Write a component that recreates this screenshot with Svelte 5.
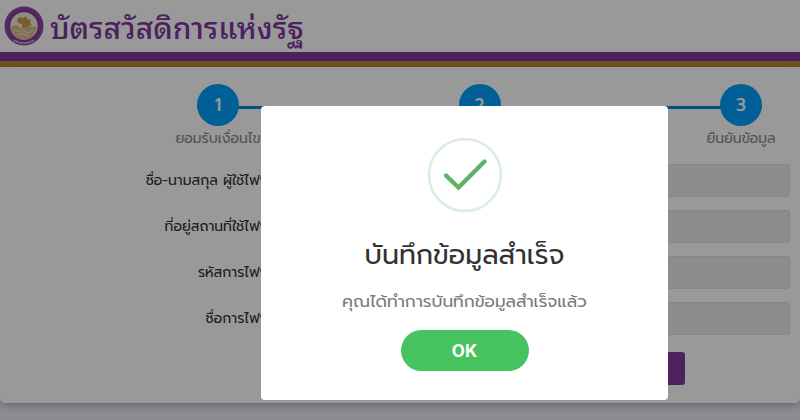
<script>
  const steps = [
    { number: 1, label: 'ยอมรับเงื่อนไข' },
    { number: 2, label: 'กรอกข้อมูล' },
    { number: 3, label: 'ยืนยันข้อมูล' }
  ];
  const fields = [
    { id: 'name', label: 'ชื่อ-นามสกุล ผู้ใช้ไฟฟ้า' },
    { id: 'address', label: 'ที่อยู่สถานที่ใช้ไฟฟ้า' },
    { id: 'code', label: 'รหัสการไฟฟ้า' },
    { id: 'office', label: 'ชื่อการไฟฟ้า' }
  ];
  let open = $state(true);
</script>

<div class="page">
  <header>
    <svg class="seal" viewBox="0 0 40 40" aria-hidden="true">
      <circle cx="20" cy="20" r="19.5" fill="#83379b" />
      <circle cx="20" cy="20" r="18.2" fill="none" stroke="#b98bc6" stroke-width=".5" />
      <circle cx="20" cy="20" r="16" fill="none" stroke="#9650aa" stroke-width="1.8" stroke-dasharray="1 1.3" />
      <circle cx="20" cy="20" r="13.8" fill="#f1e9e2" />
      <path d="M7 21 12 19 17 22 23 19 28 21 33 20A13.3 13.3 0 0 1 7 23Z" fill="#d5bd8d" />
      <path d="M9 28h22A13.3 13.3 0 0 1 9 28Z" fill="#d5bd8d" />
      <path d="m13 13 3-2 3 1 3-2 1 3 4 1-1 3 2 2-4 1-1 2-3-1-2 1v-4l-4-1Z" fill="#c99b4c" />
      <path d="m10 24 5 2 4-2 5 3 6-3M13 29l6-1 7 2" fill="none" stroke="#f2e5cc" />
      <path d="M10 34.500q10 5 20 0" fill="none" stroke="#e4d0e8" stroke-width="1.6" stroke-dasharray="1.4 .6" />
    </svg>
    <h1>บัตรสวัสดิการแห่งรัฐ</h1>
  </header>
  <main>
    <ol class="steps">
      {#each steps as step}
        <li><span class="number">{step.number}</span><span class="caption">{step.label}</span></li>
      {/each}
    </ol>
    <form onsubmit={(e) => e.preventDefault()}>
      {#each fields as field}
        <div class="row">
          <label for={field.id}>{field.label}</label>
          <input id={field.id} type="text" disabled />
        </div>
      {/each}
      <div class="actions"><button class="save" type="submit" aria-label="บันทึกข้อมูล"></button></div>
    </form>
  </main>
</div>

{#if open}
  <div class="backdrop">
    <div class="dialog" role="dialog" aria-modal="true" aria-labelledby="title">
      <svg class="check" viewBox="0 0 76 76" aria-hidden="true">
        <circle cx="38" cy="38" r="36" fill="none" stroke="#dcefdd" stroke-width="2.6" />
        <path d="M19 38.500 31.500 50.500 57.500 24.500" fill="none" stroke="#5db461" stroke-width="4.400" stroke-linecap="round" />
      </svg>
      <h2 id="title">บันทึกข้อมูลสำเร็จ</h2>
      <p>คุณได้ทำการบันทึกข้อมูลสำเร็จแล้ว</p>
      <button class="ok" type="button" onclick={() => (open = false)}>OK</button>
    </div>
  </div>
{/if}

<style>
  :global(body) {
    background: #ebecf2;
  }
  .page,
  .backdrop {
    font-family: Prompt, Kanit, 'Noto Sans Thai', 'Noto Sans', 'Open Sans', sans-serif;
  }
  .page {
    min-height: 100vh;
    overflow: hidden;
  }
  header {
    display: flex;
    align-items: center;
    gap: 6px;
    height: 52px;
    padding: 0 4px;
    background: #fff;
    border-bottom: 9px solid #82369f;
    box-shadow: 0 6px #c08a35;
  }
  .seal {
    width: 40px;
    height: 40px;
  }
  h1 {
    margin: 0;
    font-family: 'Noto Sans Thai Looped', 'Noto Looped Thai', Sarabun, Loma, Waree, Garuda, Tahoma, Prompt, 'Noto Sans Thai', 'Noto Sans', sans-serif;
    font-size: 30px;
    line-height: 40px;
    font-weight: 500;
    color: #82369f;
    white-space: nowrap;
  }
  main {
    margin-top: 6px;
    padding: 17px 10px 18px 0;
    background: #fff;
    border-radius: 0 0 5px 5px;
    box-shadow: 0 2px 10px rgba(0, 0, 0, 0.3);
  }
  .steps {
    display: flex;
    justify-content: space-between;
    margin: 0 28px 0 197px;
    padding: 0;
    list-style: none;
    background: linear-gradient(#0088dc, #0088dc) 0 22px / 100% 3px no-repeat;
  }
  .steps li {
    display: flex;
    flex-direction: column;
    align-items: center;
    width: 42px;
  }
  .number {
    width: 42px;
    height: 42px;
    border-radius: 50%;
    background: #00a0f8;
    color: #fff;
    font-size: 17px;
    line-height: 42px;
    font-weight: 500;
    text-align: center;
  }
  .caption {
    font-size: 14px;
    line-height: 26px;
    color: #8a8a8a;
    white-space: nowrap;
  }
  form {
    display: flex;
    flex-direction: column;
    gap: 13px;
    padding-top: 12px;
  }
  .row {
    display: flex;
    align-items: center;
    gap: 16px;
  }
  label {
    width: 276px;
    flex: none;
    text-align: right;
    font-size: 14px;
    line-height: 20px;
    color: #333;
    white-space: nowrap;
  }
  input {
    box-sizing: border-box;
    flex: 1;
    min-width: 0;
    height: 33px;
    border: 1px solid #dcdfe4;
    border-radius: 3px;
    background: #e9ecef;
  }
  .actions {
    display: flex;
    justify-content: flex-end;
    padding: 4px 105px 0 0;
  }
  .save {
    width: 120px;
    height: 33px;
    border: 0;
    border-radius: 3px;
    background: #83379f;
  }
  .backdrop {
    position: fixed;
    inset: 0;
    display: flex;
    justify-content: center;
    align-items: flex-end;
    padding: 0 0 20px 129px;
    background: rgba(0, 0, 0, 0.4);
  }
  .dialog {
    box-sizing: border-box;
    display: flex;
    flex-direction: column;
    align-items: center;
    width: 407px;
    padding: 31px 16px 29px;
    background: #fff;
    border-radius: 4px;
  }
  .check {
    width: 76px;
    height: 76px;
  }
  h2 {
    margin: 24px 0 0;
    font-size: 27px;
    line-height: 36px;
    font-weight: 400;
    color: #333;
    white-space: nowrap;
  }
  p {
    margin: 16px 0 17px;
    font-size: 17px;
    line-height: 24px;
    color: #777a7e;
    white-space: nowrap;
  }
  .ok {
    width: 128px;
    height: 41px;
    border: 0;
    border-radius: 21px;
    background: #46c35f;
    color: #fff;
    font: 700 17px/24px Inter, sans-serif;
  }
</style>
